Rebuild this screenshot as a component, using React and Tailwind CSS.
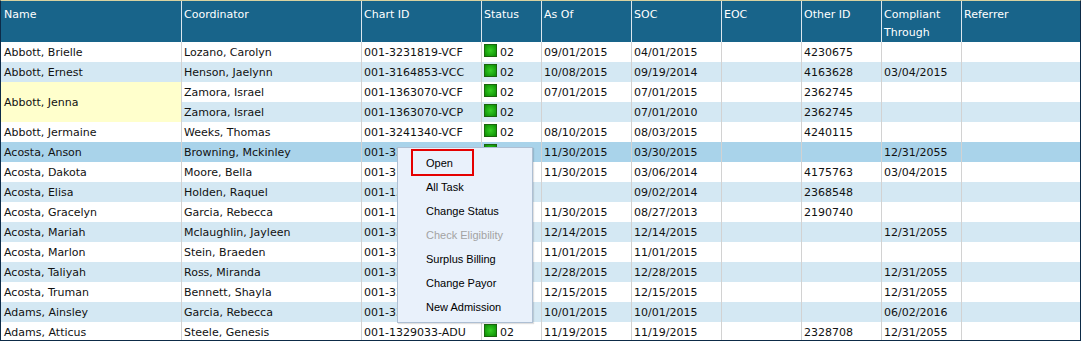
import React from "react";

const headers = ["Name", "Coordinator", "Chart ID", "Status", "As Of", "SOC", "EOC", "Other ID", "Compliant Through", "Referrer"];

// name, coordinator, chart id, status, as of, soc, eoc, other id, compliant, referrer
const rows = [
  ["Abbott, Brielle", "Lozano, Carolyn", "001-3231819-VCF", "02", "09/01/2015", "04/01/2015", "", "4230675", "", ""],
  ["Abbott, Ernest", "Henson, Jaelynn", "001-3164853-VCC", "02", "10/08/2015", "09/19/2014", "", "4163628", "03/04/2015", ""],
  ["Abbott, Jenna", "Zamora, Israel", "001-1363070-VCF", "02", "07/01/2015", "07/01/2015", "", "2362745", "", ""],
  [null, "Zamora, Israel", "001-1363070-VCP", "02", "", "07/01/2010", "", "2362745", "", ""],
  ["Abbott, Jermaine", "Weeks, Thomas", "001-3241340-VCF", "02", "08/10/2015", "08/03/2015", "", "4240115", "", ""],
  ["Acosta, Anson", "Browning, Mckinley", "001-3302117-VCF", "02", "11/30/2015", "03/30/2015", "", "", "12/31/2055", ""],
  ["Acosta, Dakota", "Moore, Bella", "001-3175763-VCC", "02", "11/30/2015", "03/06/2014", "", "4175763", "03/04/2015", ""],
  ["Acosta, Elisa", "Holden, Raquel", "001-1368548-VCF", "02", "", "09/02/2014", "", "2368548", "", ""],
  ["Acosta, Gracelyn", "Garcia, Rebecca", "001-1190740-VCF", "02", "11/30/2015", "08/27/2013", "", "2190740", "", ""],
  ["Acosta, Mariah", "Mclaughlin, Jayleen", "001-3318842-ADU", "02", "12/14/2015", "12/14/2015", "", "", "12/31/2055", ""],
  ["Acosta, Marlon", "Stein, Braeden", "001-3310458-VCF", "02", "11/01/2015", "11/01/2015", "", "", "", ""],
  ["Acosta, Taliyah", "Ross, Miranda", "001-3320916-ADU", "02", "12/28/2015", "12/28/2015", "", "", "12/31/2055", ""],
  ["Acosta, Truman", "Bennett, Shayla", "001-3319274-ADU", "02", "12/15/2015", "12/15/2015", "", "", "12/31/2055", ""],
  ["Adams, Ainsley", "Garcia, Rebecca", "001-3308127-VCF", "02", "10/01/2015", "10/01/2015", "", "", "06/02/2016", ""],
  ["Adams, Atticus", "Steele, Genesis", "001-1329033-ADU", "02", "11/19/2015", "11/19/2015", "", "2328708", "12/31/2055", ""],
];

const menuItems = ["Open", "All Task", "Change Status", "Check Eligibility", "Surplus Billing", "Change Payor", "New Admission"];

const StatusBox = () => (
  <span className="inline-block mt-[2px] w-[13px] h-[13px] border border-[#1b650e] bg-[radial-gradient(circle,#36cf24,#0c8c05)]" />
);

const rowBg = (i) => {
  if (i === 5) return "bg-[#a9d3ea]";
  return i % 2 === 0 ? "bg-white" : "bg-[#d4e8f3]";
};

export default function App() {
  return (
    <div className="relative w-[1081px] h-[341px] overflow-hidden bg-white border border-[#0d2b48] border-t-[#d8d2a0] font-['DejaVu_Sans',Verdana,sans-serif] text-[11px] text-[#111]">
      <div className="grid grid-cols-[180px_180px_120px_60px_90px_90px_80px_80px_80px_119px] grid-rows-[41px] auto-rows-[20px]">
        {headers.map((h, i) => (
          <div
            key={h}
            className={`bg-[#18648a] text-white leading-[18px] pt-[5px] ${i === 0 ? "pl-[3px]" : "pl-[2px] border-l border-[#dce7ee]"}`}
          >
            {h}
          </div>
        ))}

        {rows.map((r, i) =>
          r.map((c, j) => {
            if (j === 0 && c === null) return null;
            if (j === 0) {
              const span = c === "Abbott, Jenna";
              return (
                <div
                  key={`${i}-${j}`}
                  className={`pl-[3px] whitespace-nowrap overflow-hidden ${span ? "row-span-2 bg-[#ffffcc] flex items-center pt-[3px]" : `${rowBg(i)} leading-[22px]`}`}
                >
                  {c}
                </div>
              );
            }
            if (j === 3) {
              return (
                <div key={`${i}-${j}`} className={`${rowBg(i)} border-l border-[#d2d2d2] pl-[2px] flex items-start gap-[3px] overflow-hidden`}>
                  <StatusBox />
                  <span className="leading-[22px]">{c}</span>
                </div>
              );
            }
            return (
              <div
                key={`${i}-${j}`}
                className={`${rowBg(i)} border-l border-[#d2d2d2] pl-[2px] leading-[22px] whitespace-nowrap overflow-hidden`}
              >
                {c}
              </div>
            );
          })
        )}
      </div>

      {/* context menu */}
      <div className="absolute left-[396px] top-[146px] w-[136px] h-[176px] bg-[#e9f1fb] border border-[#aebfd3] shadow-[1px_1px_1px_rgba(0,0,0,0.12)] pt-[3px] font-['Liberation_Sans',Arial,sans-serif] text-[11px]">
        {menuItems.map((m) => (
          <div
            key={m}
            className={`h-[24px] leading-[24px] pl-[28px] ${m === "Check Eligibility" ? "text-[#a3a3a3]" : "text-black"}`}
          >
            {m}
          </div>
        ))}
        <div className="absolute left-[13px] top-[1px] w-[63px] h-[27px] border-2 border-[#e50000]" />
      </div>
    </div>
  );
}
